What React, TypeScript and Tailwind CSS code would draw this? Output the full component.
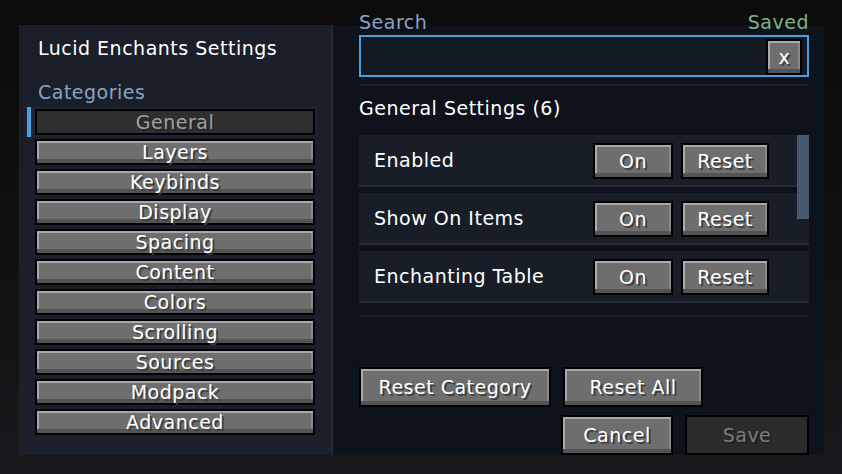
import { ReactNode } from "react";

const categories = [
  "General",
  "Layers",
  "Keybinds",
  "Display",
  "Spacing",
  "Content",
  "Colors",
  "Scrolling",
  "Sources",
  "Modpack",
  "Advanced",
];

const settings = ["Enabled", "Show On Items", "Enchanting Table"];

interface McButtonProps {
  children: ReactNode;
  className?: string;
  variant?: "normal" | "pressed" | "disabled";
}

function McButton({ children, className = "", variant = "normal" }: McButtonProps) {
  const look =
    variant === "normal"
      ? "bg-[#6e6e6e] shadow-[inset_0_-4px_0_#545454,inset_2px_2px_0_#a9a9a9,inset_-2px_0_0_#8a8a8a] text-white [text-shadow:2px_2px_0_#3e3e3e]"
      : variant === "pressed"
        ? "bg-[#2f2f2f] text-[#a0a0a0] [text-shadow:2px_2px_0_#262626]"
        : "bg-[#2b2b2b] text-[#7c7c7c] [text-shadow:2px_2px_0_#1f1f1f]";
  return (
    <div className={`flex shrink-0 items-center justify-center border-2 border-black ${look} ${className}`}>
      {children}
    </div>
  );
}

export default function App() {
  return (
    <div className="w-[842px] h-[474px] overflow-hidden bg-[linear-gradient(180deg,#0b0b0b_0%,#111113_55%,#18171b_100%)] font-['DejaVu_Sans',sans-serif] text-[19px] leading-[20px] tracking-[0.5px] text-white">
      <div className="flex pl-[19px] pt-[25px]">
        {/* Left: categories */}
        <div className="flex h-[430px] w-[314px] flex-col border-r-2 border-[#242a35] bg-[#1a1f29] pl-[8px] pt-[13px]">
          <div className="pl-[11px]">Lucid Enchants Settings</div>
          <div className="mt-[24px] pl-[11px] text-[#8ba2c2]">Categories</div>
          <div className="mt-[5px] flex flex-col">
            {categories.map((c, i) => (
              <div
                key={c}
                className={`flex h-[30px] w-[291px] items-center ${i === 0 ? "bg-[#1e2431]" : ""}`}
              >
                <div className={`h-[30px] w-[4px] ${i === 0 ? "bg-[#4a9ee3]" : ""}`} />
                <McButton
                  variant={i === 0 ? "pressed" : "normal"}
                  className="ml-[4px] h-[26px] w-[280px]"
                >
                  {c}
                </McButton>
              </div>
            ))}
          </div>
        </div>

        {/* Right: settings */}
        <div className="flex h-[430px] w-[491px] flex-col bg-[#0e121a] pl-[26px] pr-[15px]">
          <div className="-mt-[13px] flex h-[20px] justify-between">
            <span className="text-[#8ba2c2]">Search</span>
            <span className="text-[#7fb48a]">Saved</span>
          </div>
          <div className="mt-[3px] flex h-[44px] items-start justify-end border-2 border-[#4c9ee3] bg-[#131922] pr-[5px] pt-[2px]">
            <McButton className="h-[36px] w-[36px] tracking-normal">x</McButton>
          </div>
          <div className="mt-[7px] h-[2px] bg-[#1f2530]" />
          <div className="mt-[12px]">General Settings (6)</div>

          <div className="relative mt-[17px] flex flex-col gap-[6px]">
            {settings.map((s) => (
              <div
                key={s}
                className="flex h-[52px] items-center border-b-2 border-[#242b37] bg-[#181e28] pl-[15px] pr-[40px]"
              >
                <span>{s}</span>
                <div className="ml-auto mt-[2px] flex gap-[8px]">
                  <McButton className="h-[36px] w-[80px]">On</McButton>
                  <McButton className="h-[36px] w-[88px]">Reset</McButton>
                </div>
              </div>
            ))}
            <div className="absolute right-0 top-0 h-[84px] w-[12px] bg-[#46596f]" />
          </div>
          <div className="mt-[12px] h-[2px] bg-[#1a202a]" />

          <div className="mt-[50px] flex gap-[12px]">
            <McButton className="h-[40px] w-[192px]">Reset Category</McButton>
            <McButton className="h-[40px] w-[140px]">Reset All</McButton>
          </div>
          <div className="mt-[8px] flex justify-end gap-[12px]">
            <McButton className="h-[40px] w-[112px]">Cancel</McButton>
            <McButton variant="disabled" className="h-[40px] w-[124px]">
              Save
            </McButton>
          </div>
        </div>
      </div>
    </div>
  );
}
